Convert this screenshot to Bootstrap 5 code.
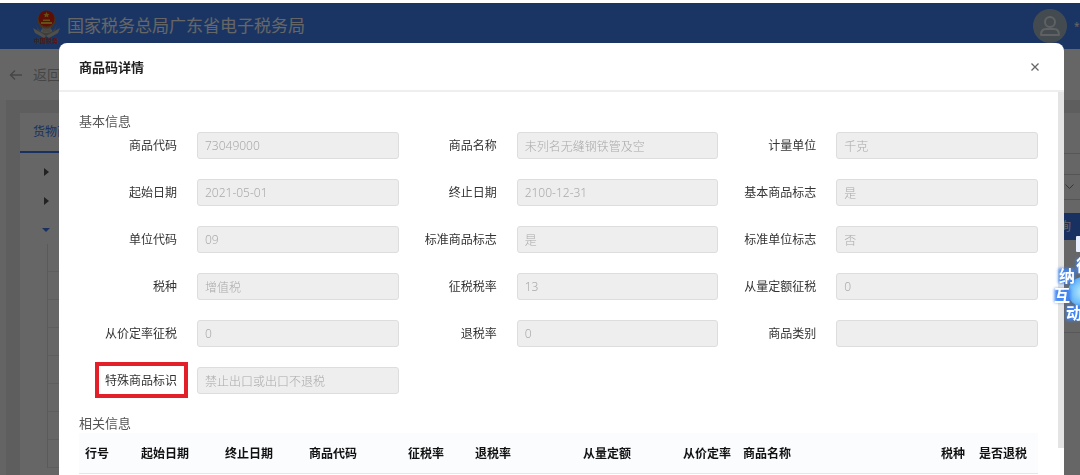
<!DOCTYPE html>
<html lang="zh-CN">
<head>
<meta charset="utf-8">
<meta name="viewport" content="width=device-width, initial-scale=1">
<title>商品码详情</title>
<link href="https://cdn.jsdelivr.net/npm/bootstrap@5.3.0/dist/css/bootstrap.min.css" rel="stylesheet">
<style>
  body { font-family: "Noto Sans", "Noto Sans CJK SC", sans-serif; font-size: 12px; line-height: 18px; color: #333; height: 100vh; overflow: hidden; }
  .page { padding-top: 3px; height: 100vh; background: #fff; overflow: hidden; }
  .topbar { height: 46px; background: #4285f8; padding-left: 32px; }
  .site-name { font-size: 17px; line-height: 24px; color: #fff; font-weight: 400; margin-left: 6px; }
  .avatar { margin-right: 7px; }
  .user-name { font-size: 10px; width: 6px; overflow: hidden; }
  .backbar { height: 51px; padding-left: 9px; color: #b0b0b0; font-size: 14px; }
  .backbar a { color: inherit; gap: 10px; }
  .workspace { background: #ebebeb; border-left: 6px solid #fafafa; padding: 13px 0 0 14px; height: calc(100% - 97px); }
  .panel { background: #fff; height: 100%; overflow: hidden; }
  .tab-link { color: #3f7cf0; height: 40px; padding: 0 13px; border-bottom: 2px solid #3f7cf0; }
  .tree { width: 240px; }
  .tree-node { height: 29px; padding-left: 22px; }
  .tree-rows { margin-left: 27px; border-left: 1px solid #e0e0e0; }
  .tree-rows li { height: 28px; border-bottom: 1px solid #ececec; }
  .filters { width: 200px; }
  .filters .gap-row { height: 21px; border-top: 1px solid #ddd; margin-top: 40px; }
  .fake-select { height: 26px; border: 1px solid #d5d5d5; border-width: 1px 0; padding-right: 6px; }
  .search-btn { height: 27px; background: #3f7cf0; color: #fff; font-size: 12px; line-height: 18px; padding: 0 9px 0 0; border: 0; border-radius: 0; text-align: right; margin-top: 13px; }
  .result-box { height: 93px; border-bottom: 1px solid #ddd; }
  .shade { top: 3px; background: rgba(0,0,0,.6); z-index: 1040; }

  .detail-dialog { max-width: none; margin: 43px 16px 0 59px; }
  .detail-dialog .modal-content { border: 0; border-radius: 8px 8px 0 0; min-height: calc(100vh - 43px); color: #333; }
  .detail-dialog .modal-header { height: 49px; padding: 0 24px 0 20px; border-bottom: 2px solid #eee; }
  .detail-dialog .modal-title { font-size: 13px; line-height: 20px; font-weight: 600; color: #222; }
  .close-btn { padding: 0; width: 10px; height: 20px; border: 0; line-height: 0; }
  .detail-dialog .modal-body { padding: 19px 20px 0; }
  .scroll-thumb { width: 6px; height: 356px; background: #e4e4e4; }
  .section-title { font-size: 13px; line-height: 20px; color: #555; margin: 0; font-weight: 400; }
  .field-grid { row-gap: 20px; padding: 1px 0 19px; }
  .field-label { width: 118px; padding-right: 20px; text-align: right; white-space: nowrap; }
  .field-input.form-control { height: 27px; min-height: 27px; font-size: 12px; line-height: 18px; padding: 0 7px; background: #eee; border: 1px solid #ddd; border-radius: 3px; color: #aaa; font-weight: 300; min-width: 0; }
  .flagged { position: relative; }
  .flagged::after { content: ""; position: absolute; inset: -10px -11px -9px -10px; border: 4px solid #e3202a; }
  .info-table { width: 100%; margin: 0; table-layout: fixed; }
  .info-table th { height: 40px; padding: 2px 6px 0; vertical-align: middle; font-size: 12px; font-weight: 700; color: #111; background: #fafcfe; border-bottom: 1px solid #e4e6ea; white-space: nowrap; }

  .helper { position: absolute; right: 0; top: 232px; width: 28px; height: 94px; overflow: hidden; z-index: 1060; }
  .helper text { font-size: 16px; font-weight: 700; fill: #fff; }
</style>
</head>
<body class="position-relative">
<div class="page">
  <header class="topbar d-flex align-items-center">
    <svg width="29" height="38" viewBox="0 0 29 38" aria-hidden="true">
      <path d="M1 21 L8 25 L10 22 L19 22 L21 25 L28 21 L26 26 L17 31 L14 29 L12 31 L3 26Z" fill="#c5c5c0"/>
      <path d="M4 17 Q7 26 14 26 Q22 26 25 17 L23 24 L14 29 L6 24Z" fill="#9a9a92"/>
      <circle cx="14.500" cy="13" r="9" fill="#b08040"/>
      <circle cx="14.500" cy="11.500" r="8" fill="#e82510"/>
      <path d="M14.500 5 l1 2 2 .2 -1.500 1.400 .5 2 -2 -1 -2 1 .5 -2 -1.500 -1.400 2 -.2z M9 15 h11 v2 h-11z M11 12.500 h7 v1.500 h-7z" fill="#ffc53a"/>
      <path d="M10 20 Q14.500 23 19 20 L18 25 H11Z" fill="#b8b0a4"/>
      <text x="2" y="36" font-size="6" fill="#e8301c" font-weight="700">中国税务</text>
    </svg>
    <h1 class="site-name mb-0">国家税务总局广东省电子税务局</h1>
    <svg class="avatar ms-auto" width="34" height="34" viewBox="0 0 34 34" aria-hidden="true">
      <circle cx="17" cy="17" r="17" fill="#a8bcc8"/>
      <circle cx="17" cy="13" r="5" fill="none" stroke="#eef2f4" stroke-width="2"/>
      <path d="M8 26 Q8 20 13 20 H21 Q26 20 26 26Z" fill="none" stroke="#eef2f4" stroke-width="2" stroke-linejoin="round"/>
    </svg>
    <span class="user-name text-white">*:</span>
  </header>
  <nav class="backbar d-flex align-items-center">
    <a href="#" class="d-flex align-items-center text-decoration-none">
      <svg width="14" height="14" viewBox="0 0 14 14" fill="none" stroke="currentColor" stroke-width="1.500"><path d="M13 7H2M6 2.500L1.500 7L6 11.500"/></svg>
      <span>返回</span>
    </a>
  </nav>
  <main class="workspace">
    <div class="panel d-flex justify-content-between">
      <section class="tree">
        <a href="#" class="tab-link d-flex align-items-center text-decoration-none">货物商</a>
        <div class="mt-1">
          <div class="tree-node d-flex align-items-center"><svg width="8" height="10"><path d="M2 1L7 5L2 9Z" fill="#555"/></svg></div>
          <div class="tree-node d-flex align-items-center"><svg width="8" height="10"><path d="M2 1L7 5L2 9Z" fill="#555"/></svg></div>
          <div class="tree-node d-flex align-items-center"><svg width="8" height="10"><path d="M0 3H8L4 7Z" fill="#3f7cf0"/></svg></div>
        </div>
        <ul class="tree-rows list-unstyled"><li></li><li></li><li></li><li></li><li></li><li></li><li></li><li></li></ul>
      </section>
      <section class="filters">
        <div class="gap-row"></div>
        <div class="fake-select d-flex align-items-center justify-content-end"><svg width="9" height="6" fill="none" stroke="#888"><path d="M.5 .5L4.500 4.500L8.500 .5"/></svg></div>
        <button type="button" class="search-btn btn w-100">查询</button>
        <div class="result-box"></div>
      </section>
    </div>
  </main>
</div>
<div class="shade position-absolute start-0 end-0 bottom-0"></div>

<div class="modal d-block overflow-hidden" role="dialog" aria-labelledby="dlgTitle">
  <div class="modal-dialog detail-dialog">
    <div class="modal-content">
      <div class="modal-header">
        <h2 class="modal-title" id="dlgTitle">商品码详情</h2>
        <button type="button" class="close-btn btn" aria-label="关闭"><svg width="10" height="10" viewBox="0 0 10 10" stroke="#666" stroke-width="1.300"><path d="M1.500 1.500L8.500 8.500M8.500 1.500L1.500 8.500"/></svg></button>
      </div>
      <div class="d-flex">
        <div class="modal-body">
          <h3 class="section-title">基本信息</h3>
          <form class="field-grid row gx-0">
            <div class="col-4 d-flex align-items-center"><label class="field-label flex-shrink-0" for="f1">商品代码</label><input class="field-input form-control" id="f1" value="73049000" disabled></div>
            <div class="col-4 d-flex align-items-center"><label class="field-label flex-shrink-0" for="f2">商品名称</label><input class="field-input form-control" id="f2" value="未列名无缝钢铁管及空" disabled></div>
            <div class="col-4 d-flex align-items-center"><label class="field-label flex-shrink-0" for="f3">计量单位</label><input class="field-input form-control" id="f3" value="千克" disabled></div>
            <div class="col-4 d-flex align-items-center"><label class="field-label flex-shrink-0" for="f4">起始日期</label><input class="field-input form-control" id="f4" value="2021-05-01" disabled></div>
            <div class="col-4 d-flex align-items-center"><label class="field-label flex-shrink-0" for="f5">终止日期</label><input class="field-input form-control" id="f5" value="2100-12-31" disabled></div>
            <div class="col-4 d-flex align-items-center"><label class="field-label flex-shrink-0" for="f6">基本商品标志</label><input class="field-input form-control" id="f6" value="是" disabled></div>
            <div class="col-4 d-flex align-items-center"><label class="field-label flex-shrink-0" for="f7">单位代码</label><input class="field-input form-control" id="f7" value="09" disabled></div>
            <div class="col-4 d-flex align-items-center"><label class="field-label flex-shrink-0" for="f8">标准商品标志</label><input class="field-input form-control" id="f8" value="是" disabled></div>
            <div class="col-4 d-flex align-items-center"><label class="field-label flex-shrink-0" for="f9">标准单位标志</label><input class="field-input form-control" id="f9" value="否" disabled></div>
            <div class="col-4 d-flex align-items-center"><label class="field-label flex-shrink-0" for="f10">税种</label><input class="field-input form-control" id="f10" value="增值税" disabled></div>
            <div class="col-4 d-flex align-items-center"><label class="field-label flex-shrink-0" for="f11">征税税率</label><input class="field-input form-control" id="f11" value="13" disabled></div>
            <div class="col-4 d-flex align-items-center"><label class="field-label flex-shrink-0" for="f12">从量定额征税</label><input class="field-input form-control" id="f12" value="0" disabled></div>
            <div class="col-4 d-flex align-items-center"><label class="field-label flex-shrink-0" for="f13">从价定率征税</label><input class="field-input form-control" id="f13" value="0" disabled></div>
            <div class="col-4 d-flex align-items-center"><label class="field-label flex-shrink-0" for="f14">退税率</label><input class="field-input form-control" id="f14" value="0" disabled></div>
            <div class="col-4 d-flex align-items-center"><label class="field-label flex-shrink-0" for="f15">商品类别</label><input class="field-input form-control" id="f15" value="" disabled></div>
            <div class="col-4 d-flex align-items-center"><label class="field-label flex-shrink-0" for="f16"><span class="flagged">特殊商品标识</span></label><input class="field-input form-control" id="f16" value="禁止出口或出口不退税" disabled></div>
          </form>
          <h3 class="section-title">相关信息</h3>
          <table class="info-table">
            <colgroup><col style="width:44px"><col style="width:84px"><col style="width:84px"><col style="width:84px"><col style="width:75px"><col style="width:67px"><col style="width:120px"><col style="width:100px"><col><col style="width:54px"><col style="width:67px"></colgroup>
            <thead><tr>
              <th scope="col">行号</th><th scope="col" class="text-center">起始日期</th><th scope="col" class="text-center">终止日期</th><th scope="col" class="text-center">商品代码</th>
              <th scope="col" class="text-end">征税率</th><th scope="col" class="text-end">退税率</th><th scope="col" class="text-end">从量定额</th><th scope="col" class="text-end">从价定率</th>
              <th scope="col">商品名称</th><th scope="col" class="text-end">税种</th><th scope="col" class="ps-2">是否退税</th>
            </tr></thead>
          </table>
        </div>
        <div class="scroll-thumb flex-shrink-0"></div>
      </div>
    </div>
  </div>
</div>

<svg class="helper" viewBox="0 0 28 94" aria-label="征纳互动">
  <defs>
    <filter id="glow" x="-50%" y="-50%" width="200%" height="200%"><feGaussianBlur stdDeviation="1.800"/></filter>
    <radialGradient id="orb"><stop offset="0" stop-color="#b8f0ff"/><stop offset="1" stop-color="#5fb0f8"/></radialGradient>
  </defs>
  <rect x="24" y="4" width="8" height="16" rx="1" fill="#e8efff"/>
  <circle cx="31" cy="60" r="15" fill="url(#orb)"/>
  <path filter="url(#glow)" fill="#3f86f5" stroke="#3f86f5" stroke-width="3" d="M8 38H21V50H8Z M4 58H17V69H4Z M16 75H30V87H16Z M26 28H34V40H26Z"/>
  <text x="24" y="39">征</text>
  <text x="7" y="50">纳</text>
  <text x="2" y="69">互</text>
  <text x="14" y="87">动</text>
</svg>
<script src="https://cdn.jsdelivr.net/npm/bootstrap@5.3.0/dist/js/bootstrap.bundle.min.js"></script>
</body>
</html>
